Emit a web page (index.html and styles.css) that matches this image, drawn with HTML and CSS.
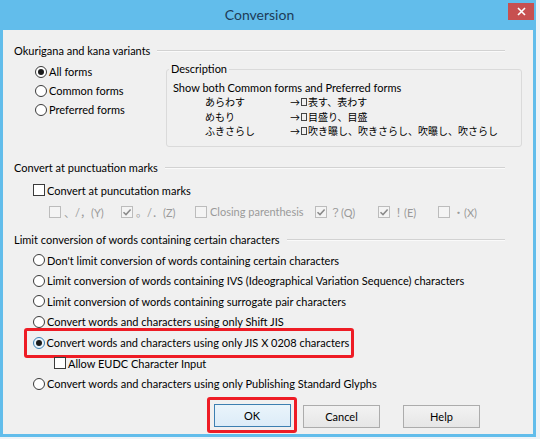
FILE: index.html
```
<!DOCTYPE html>
<html lang="en">
<head>
<meta charset="utf-8">
<title>Conversion</title>
<link rel="stylesheet" href="styles.css">
</head>
<body>
<div class="window">
  <div class="titlebar">
    <span class="title">Conversion</span>
    <span class="close"><svg width="9" height="9" viewBox="0 0 9 9"><path d="M1 1L8 8M8 1L1 8" stroke="#fff" stroke-width="1.6"/></svg></span>
  </div>
  <div class="content">
    <div class="heading"><span>Okurigana and kana variants</span><span class="rule"></span></div>
    <div class="g1-body">
      <div class="radios">
        <div class="opt"><span class="radio on"></span><span>All forms</span></div>
        <div class="opt"><span class="radio"></span><span>Common forms</span></div>
        <div class="opt"><span class="radio"></span><span>Preferred forms</span></div>
      </div>
      <fieldset class="desc">
        <legend>Description</legend>
        <div class="desc-text">Show both Common forms and Preferred forms</div>
        <div class="jp-rows">
          <span>あらわす</span><span>→<i class="tofu"></i>表す、表わす</span>
          <span>めもり</span><span>→<i class="tofu"></i>目盛り、目盛</span>
          <span>ふきさらし</span><span>→<i class="tofu"></i>吹き曝し、吹きさらし、吹曝し、吹さらし</span>
        </div>
      </fieldset>
    </div>

    <div class="heading h2"><span>Convert at punctuation marks</span><span class="rule"></span></div>
    <div class="opt check-row"><span class="check"></span><span>Convert at puncutation marks</span></div>
    <div class="punct-row">
      <div class="popt"><span class="check dis"></span><span>、/，(Y)</span></div>
      <div class="popt"><span class="check dis"><svg width="10" height="10" viewBox="0 0 10 10"><path d="M1.5 5.2L4 7.6L8.6 2.4" fill="none" stroke="#8a8a8a" stroke-width="1.5"/></svg></span><span>。/．(Z)</span></div>
      <div class="popt"><span class="check dis"></span><span>Closing parenthesis</span></div>
      <div class="popt"><span class="check dis"><svg width="10" height="10" viewBox="0 0 10 10"><path d="M1.5 5.2L4 7.6L8.6 2.4" fill="none" stroke="#8a8a8a" stroke-width="1.5"/></svg></span><span>？(Q)</span></div>
      <div class="popt"><span class="check dis"><svg width="10" height="10" viewBox="0 0 10 10"><path d="M1.5 5.2L4 7.6L8.6 2.4" fill="none" stroke="#8a8a8a" stroke-width="1.5"/></svg></span><span>！(E)</span></div>
      <div class="popt"><span class="check dis"></span><span>・(X)</span></div>
    </div>

    <div class="heading h3"><span>Limit conversion of words containing certain characters</span><span class="rule"></span></div>
    <div class="limit-list">
      <div class="opt lrow"><span class="radio"></span><span>Don't limit conversion of words containing certain characters</span></div>
      <div class="opt lrow"><span class="radio"></span><span>Limit conversion of words containing IVS (Ideographical Variation Sequence) characters</span></div>
      <div class="opt lrow"><span class="radio"></span><span>Limit conversion of words containing surrogate pair characters</span></div>
      <div class="opt lrow"><span class="radio"></span><span>Convert words and characters using only Shift JIS</span></div>
      <div class="lrow"><div class="opt mark"><span class="radio on focus"></span><span>Convert words and characters using only JIS X 0208 characters</span></div></div>
      <div class="opt lrow sub"><span class="check"></span><span>Allow EUDC Character Input</span></div>
      <div class="opt lrow"><span class="radio"></span><span>Convert words and characters using only Publishing Standard Glyphs</span></div>
    </div>

    <div class="buttons">
      <div class="mark-btn"><button class="btn default">OK</button></div>
      <button class="btn">Cancel</button>
      <button class="btn">Help</button>
    </div>
  </div>
</div>
</body>
</html>
```
FILE: styles.css
```
html, body {
  margin: 0;
  padding: 0;
}
body {
  width: 540px;
  height: 439px;
  background: #eef3f7;
  font-family: "Lato", "Noto Sans CJK JP", sans-serif;
  font-size: 11px;
  color: #000;
  overflow: hidden;
}
.window {
  width: 536px;
  height: 437px;
  background: #62bdeb;
  display: flex;
  flex-direction: column;
}
.titlebar {
  height: 30px;
  display: flex;
  align-items: flex-start;
  flex: none;
}
.title {
  flex: 1;
  text-align: center;
  padding-left: 11px;
  line-height: 30px;
  font-size: 14px;
  color: #1d3b58;
}
.close {
  width: 26px;
  height: 17px;
  margin: 3px 2px 0 0;
  background: #c75050;
  display: flex;
  align-items: center;
  justify-content: center;
}
.content {
  flex: 1;
  margin: 0 3px 3px;
  background: #f0f0f0;
  padding: 13px 11px 0 11px;
  display: flex;
  flex-direction: column;
}
.heading {
  display: flex;
  align-items: center;
  height: 16px;
  line-height: 16px;
  margin-right: 17px;
  white-space: nowrap;
}
.heading .rule {
  flex: 1;
  margin-left: 7px;
  border-top: 1px solid #d2d2d2;
  border-bottom: 1px solid #fafafa;
}
.g1-body {
  display: grid;
  grid-template-columns: 152px 1fr;
  padding-top: 3px;
  align-items: start;
}
.radios {
  padding-left: 21px;
}
.opt {
  display: flex;
  align-items: center;
  height: 19px;
  gap: 2px;
  white-space: nowrap;
}
.radio {
  width: 12px;
  height: 12px;
  box-sizing: border-box;
  border: 1px solid #3a3a3a;
  border-radius: 50%;
  background: #fff;
  display: flex;
  align-items: center;
  justify-content: center;
  flex: none;
}
.radio.on::after {
  content: "";
  width: 6px;
  height: 6px;
  border-radius: 50%;
  background: #1b1b1b;
}
.radio.focus {
  border-color: #3c7fb1;
  background: #e9f3fb;
}
.check {
  width: 12px;
  height: 12px;
  box-sizing: border-box;
  border: 1px solid #3a3a3a;
  background: #fff;
  flex: none;
  display: flex;
  align-items: center;
  justify-content: center;
}
.check.dis {
  border-color: #bcbcbc;
  background: #f4f4f4;
}
.desc {
  margin: 0;
  padding: 0 6px 7px 6px;
  border: 1px solid #dadada;
  border-radius: 3px;
  min-width: 0;
}
.desc legend {
  padding: 0 2px;
  margin-left: -4px;
  line-height: 14px;
}
.desc-text {
  margin-top: 5px;
  line-height: 14px;
  white-space: nowrap;
}
.jp-rows {
  display: grid;
  grid-template-columns: 85px auto;
  grid-auto-rows: 14.5px;
  line-height: 14.5px;
  font-size: 10px;
  padding-left: 32px;
  white-space: nowrap;
}
.tofu {
  display: inline-block;
  width: 4px;
  height: 6px;
  border: 1px solid #444;
  margin: 0 1px 0 1px;
  vertical-align: 0;
}
.h2 {
  margin-top: 13px;
}
.check-row {
  margin-top: 4.5px;
  height: 20px;
  padding-left: 19px;
}
.punct-row {
  margin-top: 1.7px;
  height: 20px;
  padding-left: 35px;
  display: grid;
  grid-template-columns: 72px 74px 120px 63px 60px auto;
  align-items: center;
  color: #9a9a9a;
}
.popt {
  display: flex;
  align-items: center;
  gap: 3px;
  white-space: nowrap;
}
.h3 {
  margin-top: 10.3px;
}
.limit-list {
  margin-top: 1.7px;
}
.lrow {
  height: 20.67px;
  padding-left: 19px;
}
.lrow.sub {
  padding-left: 40px;
}
.mark {
  display: inline-flex;
  box-sizing: border-box;
  width: 330px;
  height: 30px;
  margin: -4.67px 0 0 -9px;
  padding: 0 0 0 5.5px;
  border: 3.5px solid #ee1c25;
  border-radius: 3px;
  overflow: hidden;
}
.buttons {
  display: flex;
  align-items: flex-start;
  justify-content: flex-end;
  margin-top: 2.7px;
  margin-right: 42px;
}
.mark-btn {
  box-sizing: border-box;
  height: 36px;
  padding: 4.5px 3.5px 0;
  border: 3.5px solid #ee1c25;
  border-radius: 3px;
  margin-right: 6px;
}
.btn {
  width: 77px;
  height: 23px;
  margin: 0;
  padding: 0;
  font-family: "Lato", sans-serif;
  font-size: 11px;
  color: #000;
  border: 1px solid #acacac;
  background: linear-gradient(#f2f2f2, #e6e6e6);
}
.buttons > .btn {
  margin-top: 8px;
}
.buttons > .btn + .btn {
  margin-left: 23px;
}
.btn.default {
  border-color: #3c7fb1;
  background: linear-gradient(#eaf4fb, #dcecf8);
}
```
